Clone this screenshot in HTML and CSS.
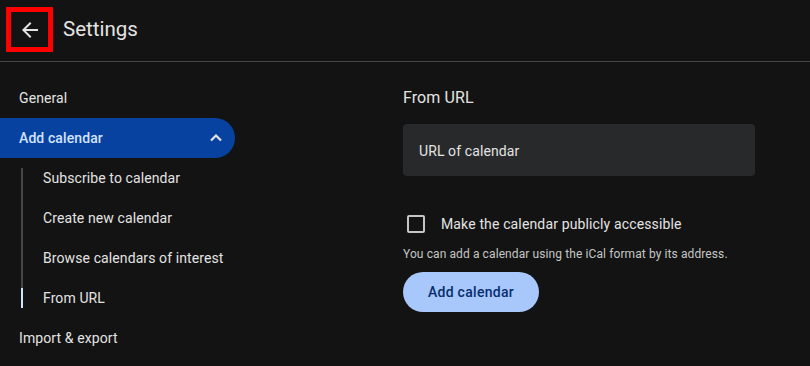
FILE: index.html
```html
<!DOCTYPE html>
<html>
<head>
<meta charset="utf-8">
<link rel="stylesheet" href="styles.css">
</head>
<body>
<header class="header">
  <div class="back">
    <svg width="24" height="24" viewBox="0 0 24 24"><path fill="#e3e3e3" d="M20 11H7.83l5.59-5.59L12 4l-8 8 8 8 1.41-1.41L7.83 13H20v-2z"/></svg>
  </div>
  <h1 class="title">Settings</h1>
</header>
<div class="main">
  <nav class="sidebar">
    <div class="nav-item">General</div>
    <div class="nav-item active">
      <span>Add calendar</span>
      <svg class="chev" width="14" height="10" viewBox="0 0 14 10"><path d="M2 7.5 7 2.5l5 5" fill="none" stroke="#e3e3e3" stroke-width="2.2"/></svg>
    </div>
    <div class="sub-list">
      <div class="sub-item">Subscribe to calendar</div>
      <div class="sub-item">Create new calendar</div>
      <div class="sub-item">Browse calendars of interest</div>
      <div class="sub-item selected">From URL</div>
    </div>
    <div class="nav-item">Import &amp; export</div>
  </nav>
  <section class="content">
    <h2 class="heading">From URL</h2>
    <div class="input">URL of calendar</div>
    <label class="check-row">
      <span class="checkbox"></span>
      <span class="check-label">Make the calendar publicly accessible</span>
    </label>
    <p class="help">You can add a calendar using the iCal format by its address.</p>
    <button class="btn">Add calendar</button>
  </section>
</div>
</body>
</html>
```
FILE: styles.css
```css
* { box-sizing: border-box; }
html, body { margin: 0; padding: 0; }
body {
  background: #131313;
  color: #e3e3e3;
  font-family: Roboto, "Noto Sans", sans-serif;
  letter-spacing: 0.1px;
  width: 810px;
  height: 366px;
  overflow: hidden;
}
.header {
  height: 62px;
  border-bottom: 1px solid #444746;
  display: flex;
  align-items: center;
  padding-left: 6px;
  padding-bottom: 4px;
}
.back {
  width: 47px;
  height: 45px;
  border: 5px solid #ff0000;
  display: flex;
  align-items: center;
  justify-content: center;
  margin-top: 2px;
}
.back svg { display: block; }
.title {
  margin: 0 0 0 10px;
  font-size: 20.5px;
  font-weight: 400;
  color: #e3e3e3;
  letter-spacing: 0;
}
.main {
  display: flex;
}
.sidebar {
  width: 256px;
  padding-top: 16px;
}
.nav-item {
  height: 40px;
  display: flex;
  align-items: center;
  justify-content: space-between;
  padding: 0 12px 0 19px;
  font-size: 14px;
  width: 235px;
}
.nav-item.active {
  background: #0842a0;
  border-radius: 0 20px 20px 0;
  font-weight: 500;
  color: #d3e3fd;
}
.chev { display: block; }
.sub-list {
  margin-left: 21px;
  position: relative;
}
.sub-list::before {
  content: "";
  position: absolute;
  left: 0;
  top: 10px;
  bottom: 10px;
  width: 2px;
  background: #444746;
}
.sub-item {
  height: 40px;
  display: flex;
  align-items: center;
  padding-left: 22px;
  font-size: 14px;
  position: relative;
}
.sub-item.selected::before {
  content: "";
  position: absolute;
  left: 0;
  top: 10px;
  height: 20px;
  width: 2px;
  background: #d3e3fd;
}
.content {
  padding-left: 147px;
  padding-top: 26px;
  width: 500px;
}
.heading {
  margin: 0;
  font-size: 16px;
  font-weight: 400;
  height: 20px;
  line-height: 20px;
  color: #e3e3e3;
}
.input {
  margin-top: 16px;
  width: 352px;
  height: 52px;
  background: #28292a;
  border-radius: 4px;
  display: flex;
  align-items: center;
  padding-left: 16px;
  font-size: 14px;
  color: #e3e3e3;
  padding-top: 1px;
}
.check-row {
  margin-top: 39px;
  display: flex;
  align-items: center;
  height: 18px;
  padding-left: 4px;
}
.checkbox {
  width: 18px;
  height: 18px;
  border: 2px solid #c4c7c5;
  border-radius: 2px;
}
.check-label {
  margin-left: 16px;
  font-size: 14px;
  letter-spacing: 0.14px;
  color: #e3e3e3;
}
.help {
  margin: 13px 0 0 0;
  font-size: 12px;
  line-height: 16px;
  color: #c4c7c5;
}
.btn {
  margin-top: 10px;
  width: 136px;
  height: 40px;
  border: none;
  border-radius: 20px;
  background: #a8c7fa;
  color: #062e6f;
  font-family: Roboto, "Noto Sans", sans-serif;
  font-size: 14px;
  font-weight: 500;
  letter-spacing: 0.3px;
}
```
